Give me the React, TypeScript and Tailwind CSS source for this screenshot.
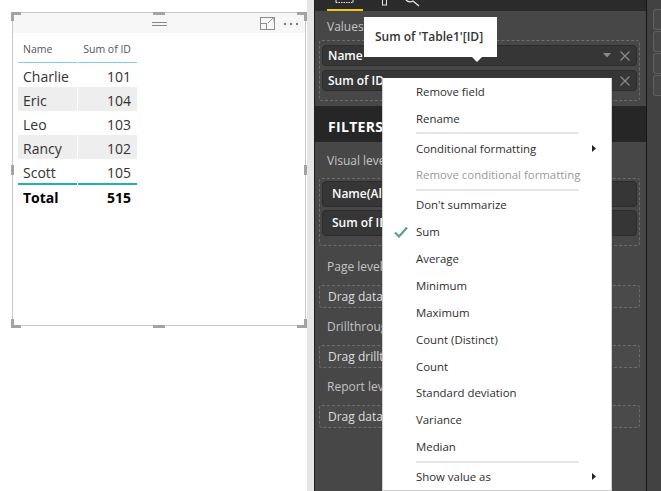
import React from "react";

const FONT = "font-['Open_Sans','Noto_Sans',sans-serif]";

function Handle({ cls }: { cls: string }) {
  return <div className={`absolute bg-[#a3a3a3] ${cls}`} />;
}

function TableVisual() {
  const rows = [
    { n: "Charlie", v: 101, alt: false },
    { n: "Eric", v: 104, alt: true },
    { n: "Leo", v: 103, alt: false },
    { n: "Rancy", v: 102, alt: true },
    { n: "Scott", v: 105, alt: false },
  ];
  return (
    <div className="relative ml-[11px] mt-[12px] w-[296px] h-[316px]">
      <div className="ml-[1px] mt-[1px] w-[294px] h-[314px] border border-[#c8c8c8] bg-white flex flex-col">
        <div className="h-[20px] bg-[#f7f7f7] grid grid-cols-[1fr_auto_1fr] items-center">
          <div />
          <div className="flex flex-col gap-[2px] w-[15px] mt-[1px]">
            <div className="h-px bg-[#8a8a8a]" />
            <div className="h-px bg-[#8a8a8a]" />
          </div>
          <div className="flex justify-end items-center pr-[7px] gap-[9px]">
            <svg width="15" height="13" viewBox="0 0 15 13" className="mt-[1px]">
              <rect x="0.5" y="0.5" width="14" height="12" fill="none" stroke="#8c8c8c" />
              <rect x="0.5" y="6.5" width="6" height="6" fill="none" stroke="#8c8c8c" />
              <path d="M8 6 L13.5 0.5 M10 0.5 H14 V4.5" fill="none" stroke="#8c8c8c" />
            </svg>
            <div className="flex gap-[4px] mt-[2px]">
              <div className="w-[2px] h-[2px] bg-[#777]" />
              <div className="w-[2px] h-[2px] bg-[#777]" />
              <div className="w-[2px] h-[2px] bg-[#777]" />
            </div>
          </div>
        </div>
        <div className={`ml-[5px] mt-[3px] w-[119px] ${FONT}`}>
          <div className="grid grid-cols-[59px_59px] gap-x-px h-[26px] items-center pt-[2px] text-[10.5px] text-[#555]">
            <div className="pl-[5px]">Name</div>
            <div className="text-right pr-[6px]">Sum of ID</div>
          </div>
          <div className="grid grid-cols-[59px_59px] gap-x-px">
            <div className="h-px bg-[#7fd6cf]" />
            <div className="h-px bg-[#7fd6cf]" />
          </div>
          {rows.map((r) => (
            <div key={r.n} className="grid grid-cols-[59px_59px] gap-x-px h-[24px] text-[14px] text-[#333]">
              <div className={`pl-[5px] flex items-center pt-[3px] ${r.alt ? "bg-[#eeeeee]" : ""}`}>{r.n}</div>
              <div className={`pr-[6px] flex items-center justify-end pt-[3px] ${r.alt ? "bg-[#eeeeee]" : ""}`}>{r.v}</div>
            </div>
          ))}
          <div className="grid grid-cols-[59px_59px] gap-x-px">
            <div className="h-[2px] bg-[#1bb5ac]" />
            <div className="h-[2px] bg-[#1bb5ac]" />
          </div>
          <div className="grid grid-cols-[59px_59px] gap-x-px h-[24px] text-[14px] font-bold text-black">
            <div className="pl-[5px] flex items-center pt-[1px]">Total</div>
            <div className="pr-[6px] flex items-center justify-end pt-[1px]">515</div>
          </div>
        </div>
      </div>
      <Handle cls="left-0 top-0 w-[10px] h-[3px]" />
      <Handle cls="left-0 top-0 w-[3px] h-[9px]" />
      <Handle cls="right-0 top-0 w-[10px] h-[3px]" />
      <Handle cls="right-0 top-0 w-[3px] h-[9px]" />
      <Handle cls="left-0 bottom-0 w-[10px] h-[3px]" />
      <Handle cls="left-0 bottom-0 w-[3px] h-[9px]" />
      <Handle cls="right-0 bottom-0 w-[10px] h-[3px]" />
      <Handle cls="right-0 bottom-0 w-[3px] h-[9px]" />
      <Handle cls="left-[142px] top-0 w-[12px] h-[3px]" />
      <Handle cls="left-[142px] bottom-0 w-[12px] h-[3px]" />
      <Handle cls="left-0 top-[153px] w-[3px] h-[10px]" />
      <Handle cls="right-0 top-[153px] w-[3px] h-[10px]" />
    </div>
  );
}

function ValuePill({ label }: { label: string }) {
  return (
    <div className="h-[21px] rounded-[4px] bg-[#363636] border border-[#2c2c2c] flex items-center pl-[5px] pr-[6px]">
      <span className="flex-1 text-[12px] font-semibold text-white whitespace-nowrap">{label}</span>
      <svg width="8" height="5" viewBox="0 0 8 5" className="mr-[9px]">
        <path d="M0 0 H8 L4 4.5 Z" fill="#8a8a8a" />
      </svg>
      <svg width="10" height="10" viewBox="0 0 10 10">
        <path d="M0.5 0.5 L9.5 9.5 M9.5 0.5 L0.5 9.5" stroke="#8a8a8a" strokeWidth="1.2" />
      </svg>
    </div>
  );
}

function FilterPill({ label }: { label: string }) {
  return (
    <div className="h-[26px] rounded-[4px] bg-[#363636] border border-[#2c2c2c] flex items-center pl-[9px]">
      <span className="text-[12px] font-semibold text-white whitespace-nowrap">{label}</span>
    </div>
  );
}

function DropBox({ label }: { label: string }) {
  return (
    <div className="ml-[4px] mr-[6px] h-[23px] rounded-[3px] border border-dashed border-[#6c6c6c] bg-[#4a4a4a] flex items-center pl-[8px]">
      <span className="text-[12px] text-[#dedede] whitespace-nowrap">{label}</span>
    </div>
  );
}

function Label({ text, h, pt }: { text: string; h: string; pt: string }) {
  return (
    <div className={`${h} ${pt} flex items-center pl-[12px] text-[12px] text-[#c4c4c4] whitespace-nowrap`}>{text}</div>
  );
}

function Panel() {
  return (
    <div className={`w-[331px] h-full bg-[#474747] flex flex-col ${FONT}`}>
      <div className="h-[11px] bg-[#2b2b2b] shrink-0">
        <svg width="110" height="11" viewBox="0 0 110 11" className="block">
          <path d="M21 2.5 H38" stroke="#e8e8e8" strokeDasharray="1.5 1" />
          <path d="M21 0 V2.5 M38 0 V2.5" stroke="#e8e8e8" />
          <rect x="12" y="9" width="36" height="2" fill="#f2c811" />
          <rect x="67.5" y="-1" width="4" height="6" fill="none" stroke="#e8e8e8" />
          <path d="M91 0 Q94 3 98 1 L104 6" fill="none" stroke="#e8e8e8" strokeWidth="1.3" />
        </svg>
      </div>
      <Label text="Values" h="h-[29px]" pt="pt-[3px]" />
      <div className="ml-[4px] mr-[6px] rounded-[3px] border border-dashed border-[#6c6c6c] pt-[4px] pb-[9px] px-[2px] flex flex-col gap-[4px]">
        <ValuePill label="Name" />
        <ValuePill label="Sum of ID" />
      </div>
      <div className="mt-[5px] h-[36px] bg-[#262626] flex items-center pl-[13px] pt-[5px] shrink-0">
        <span className="text-[14px] font-bold text-white tracking-[0.3px]">FILTERS</span>
      </div>
      <Label text="Visual level filters" h="h-[36px]" pt="pt-[2px]" />
      <div className="ml-[4px] mr-[6px] rounded-[3px] border border-dashed border-[#6c6c6c] pt-[2px] pb-[9px] px-[2px] flex flex-col gap-[3px]">
        <FilterPill label="Name(All)" />
        <FilterPill label="Sum of ID" />
      </div>
      <Label text="Page level filters" h="h-[39px]" pt="pt-[3px]" />
      <DropBox label="Drag data fields here" />
      <Label text="Drillthrough filters" h="h-[37px]" pt="pt-[1px]" />
      <DropBox label="Drag drillthrough fields here" />
      <Label text="Report level filters" h="h-[37px]" pt="pt-[1px]" />
      <DropBox label="Drag data fields here" />
    </div>
  );
}

function MenuItem({ text, disabled, checked, sub }: { text: string; disabled?: boolean; checked?: boolean; sub?: boolean }) {
  return (
    <div className={`h-[27px] flex items-center ${disabled ? "text-[#9a9a9a]" : "text-[#2e2e2e]"}`}>
      <div className="w-[33px] flex justify-center pl-[2px]">
        {checked && (
          <svg width="14" height="12" viewBox="0 0 14 12">
            <path d="M1 6.5 L5 10.5 L13 1.5" fill="none" stroke="#5d9e90" strokeWidth="2.2" />
          </svg>
        )}
      </div>
      <span className="flex-1 text-[11.4px] whitespace-nowrap">{text}</span>
      {sub && (
        <svg width="4" height="7" viewBox="0 0 4 7" className="mr-[15px]">
          <path d="M0 0 L4 3.5 L0 7 Z" fill="#222" />
        </svg>
      )}
    </div>
  );
}

function Sep() {
  return (
    <div className="h-[3px] flex items-center pl-[33px] pr-[32px]">
      <div className="h-[2px] w-full bg-[#e6e6e6]" />
    </div>
  );
}

function ContextMenu() {
  return (
    <div className={`absolute left-[382px] top-[78px] w-[230px] h-[413px] bg-white border border-[#cfcfcf] border-t-0 flex flex-col ${FONT}`}>
      <MenuItem text="Remove field" />
      <MenuItem text="Rename" />
      <Sep />
      <MenuItem text="Conditional formatting" sub />
      <MenuItem text="Remove conditional formatting" disabled />
      <Sep />
      <MenuItem text="Don't summarize" />
      <MenuItem text="Sum" checked />
      <MenuItem text="Average" />
      <MenuItem text="Minimum" />
      <MenuItem text="Maximum" />
      <MenuItem text="Count (Distinct)" />
      <MenuItem text="Count" />
      <MenuItem text="Standard deviation" />
      <MenuItem text="Variance" />
      <MenuItem text="Median" />
      <Sep />
      <MenuItem text="Show value as" sub />
    </div>
  );
}

function Tooltip() {
  return (
    <div className={`absolute left-[364px] top-[17px] w-[133px] h-[40px] bg-white flex items-center pl-[11px] ${FONT}`}>
      <span className="text-[12px] font-semibold text-[#333] whitespace-nowrap">Sum of 'Table1'[ID]</span>
      <svg width="12" height="6" viewBox="0 0 12 6" className="absolute left-[107px] top-[39px]">
        <path d="M0 0 H12 L6 6 Z" fill="white" />
      </svg>
    </div>
  );
}

function RightStrip() {
  return (
    <div className="w-[14px] h-full bg-[#424242] flex flex-col pt-[9px] pl-[6px] gap-[1px]">
      {[0, 1, 2, 3].map((i) => (
        <div key={i} className="h-[21px] w-full rounded-l-[3px] bg-[#484848] border border-r-0 border-[#5e5e5e]" />
      ))}
    </div>
  );
}

export default function App() {
  return (
    <div className="relative w-[661px] h-[491px] overflow-hidden flex bg-white">
      <div className="w-[307px] h-full bg-white shrink-0">
        <TableVisual />
      </div>
      <div className="w-[7px] h-full bg-[#e6e6e6] shrink-0" />
      <div className="w-px h-full bg-[#1e1e1e] shrink-0" />
      <Panel />
      <div className="w-px h-full bg-[#151515] shrink-0" />
      <RightStrip />
      <ContextMenu />
      <Tooltip />
    </div>
  );
}
